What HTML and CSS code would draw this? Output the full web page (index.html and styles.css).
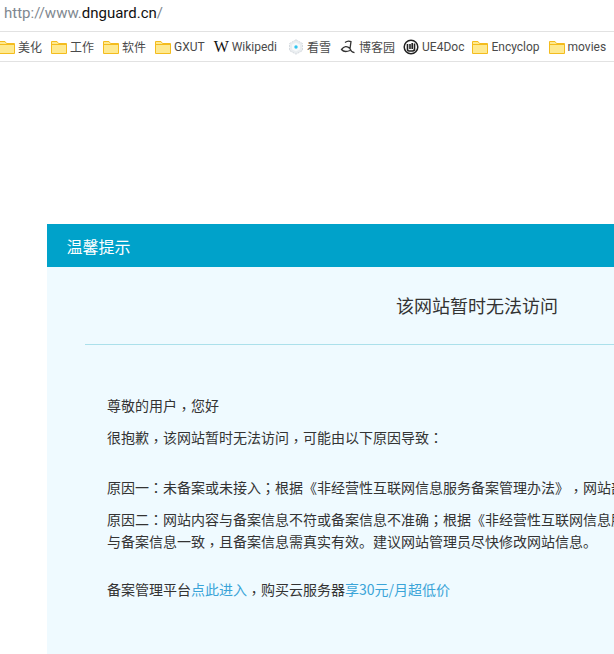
FILE: index.html
```html
<!DOCTYPE html>
<html lang="zh-CN">
<head>
<meta charset="utf-8">
<title>该网站暂时无法访问</title>
<link rel="stylesheet" href="styles.css">
</head>
<body>
<svg class="defs" width="0" height="0" aria-hidden="true">
  <symbol id="folder" viewBox="0 0 16 14">
    <path d="M.5 13.500V1.500h5.500l1.500 2h8v10z" fill="#fee98f" stroke="#f4bc1e"/>
    <path d="M1 4.500h14" stroke="#f4bc1e" stroke-width="1"/>
  </symbol>
</svg>
<div class="address"><span class="scheme">http://www.</span><span class="domain">dnguard.cn</span><span class="scheme">/</span></div>
<nav class="bookmarks">
  <a class="mark first"><svg class="ico folder"><use href="#folder"/></svg>美化</a>
  <a class="mark"><svg class="ico folder"><use href="#folder"/></svg>工作</a>
  <a class="mark"><svg class="ico folder"><use href="#folder"/></svg>软件</a>
  <a class="mark"><svg class="ico folder"><use href="#folder"/></svg>GXUT</a>
  <a class="mark wide"><span class="wiki">W</span>Wikipedi</a>
  <a class="mark"><svg class="ico" viewBox="0 0 16 16"><path d="M8 .800 14.500 4.500v7L8 15.200 1.500 11.500v-7z" fill="#e9edf0" stroke="#d5dadf" stroke-dasharray="2 1"/><path d="M8 3.500 12 5.800v4.400L8 12.500 4 10.200V5.800z" fill="#f7f9fa"/><circle cx="8" cy="8" r="1.700" fill="#30c5f0"/></svg>看雪</a>
  <a class="mark tight"><svg class="ico" viewBox="0 0 16 16"><path d="M5 3.500c2-1.500 4-1.800 6-.8l-1 7c.5 2 2 3.500 4.500 4M10 9.500C7 6.500 4 7 1.500 10.500c2 2.500 5 2.500 8.500 1" fill="none" stroke="#333" stroke-width="1.300"/></svg>博客园</a>
  <a class="mark tight"><svg class="ico" viewBox="0 0 16 16"><circle cx="8" cy="8" r="6.800" fill="#fff" stroke="#222" stroke-width="1.500"/><path d="M4.500 5v5.500q0 1.500 1.500 1.500h4l1.500-1V4.500M7 5v5M9.200 4v6" fill="none" stroke="#222" stroke-width="1.600"/></svg>UE4Doc</a>
  <a class="mark"><svg class="ico folder"><use href="#folder"/></svg>Encyclop</a>
  <a class="mark"><svg class="ico folder"><use href="#folder"/></svg>movies</a>
</nav>
<main class="page">
  <section class="card">
    <header class="card-head">温馨提示</header>
    <div class="card-body">
      <h1 class="title">该网站暂时无法访问</h1>
      <div class="content">
        <p class="line greet">尊敬的用户<span class="p low" lang="zh-TW">，</span>您好</p>
        <p class="line">很抱歉<span class="p low" lang="zh-TW">，</span>该网站暂时无法访问<span class="p low" lang="zh-TW">，</span>可能由以下原因导致<span class="p" lang="zh-TW">：</span></p>
        <p class="line reason">原因一<span class="p" lang="zh-TW">：</span>未备案或未接入<span class="p" lang="zh-TW">；</span>根据《非经营性互联网信息服务备案管理办法》<span class="p low" lang="zh-TW">，</span>网站部署服务器后需完成备案</p>
        <p class="line">原因二<span class="p" lang="zh-TW">：</span>网站内容与备案信息不符或备案信息不准确<span class="p" lang="zh-TW">；</span>根据《非经营性互联网信息服务备案管理办法》<span class="p low" lang="zh-TW">，</span>网站内容需要<br>与备案信息一致<span class="p low" lang="zh-TW">，</span>且备案信息需真实有效。建议网站管理员尽快修改网站信息。</p>
        <p class="line platform">备案管理平台<a class="link">点此进入</a><span class="p low" lang="zh-TW">，</span>购买云服务器<a class="link">享30元/月超低价</a></p>
      </div>
    </div>
  </section>
</main>
</body>
</html>
```
FILE: styles.css
```css
html, body { margin: 0; padding: 0; height: 654px; overflow: hidden; background: #fff; }
body { font-family: "Liberation Sans", "Noto Sans CJK SC", sans-serif; color: #333; text-spacing-trim: space-all; }
.defs { display: block; height: 0; }
.address { box-sizing: border-box; height: 32px; padding: 3px 0 0 4px; font: 15px/20px Roboto, sans-serif; border-bottom: 1px solid #e2e2e2; white-space: nowrap; }
.scheme { color: #7f8890; }
.domain { color: #111; }
.bookmarks { box-sizing: border-box; height: 30px; display: flex; align-items: center; border-bottom: 1px solid #e2e2e2; white-space: nowrap; overflow: hidden; font: 12px Roboto, "Noto Sans CJK SC", sans-serif; color: #4a4a4a; }
.mark { display: flex; align-items: center; gap: 3px; margin-right: 9px; flex: none; }
.mark.first { margin-left: -1px; }
.mark.wide { margin-right: 11px; }
.mark.tight { margin-right: 8px; }
.ico { width: 16px; height: 16px; flex: none; }
.folder { height: 14px; }
.wiki { font: 400 16px "Liberation Serif", serif; color: #111; width: 15px; }
.page { padding: 162px 0 0 47px; }
.card { width: 860px; height: 430px; background: #effaff; }
.card-head { box-sizing: border-box; height: 43px; padding-left: 19.5px; background: #00a2ca; color: #fff; font: 16px/44px "Noto Sans CJK SC", sans-serif; }
.card-body { padding: 0 0 0 38px; }
.title { box-sizing: border-box; height: 78px; margin: 0; padding: 23px 38px 0 0; border-bottom: 1px solid #abe0eb; text-align: center; font: 400 18px/30px "Noto Sans CJK SC", sans-serif; color: #333; }
.content { padding: 0 0 0 22px; }
.line { margin: 0 0 10px; font: 14px/22px "Noto Sans CJK SC", sans-serif; color: #333; white-space: nowrap; }
.greet { margin-top: 49px; }
.reason { margin-top: 28px; }
.platform { margin-top: 26px; }
.link { color: #3aa4d8; }
.p { font-family: "Noto Sans CJK TC", sans-serif; line-height: 1; }
.low { vertical-align: -3px; }
```
